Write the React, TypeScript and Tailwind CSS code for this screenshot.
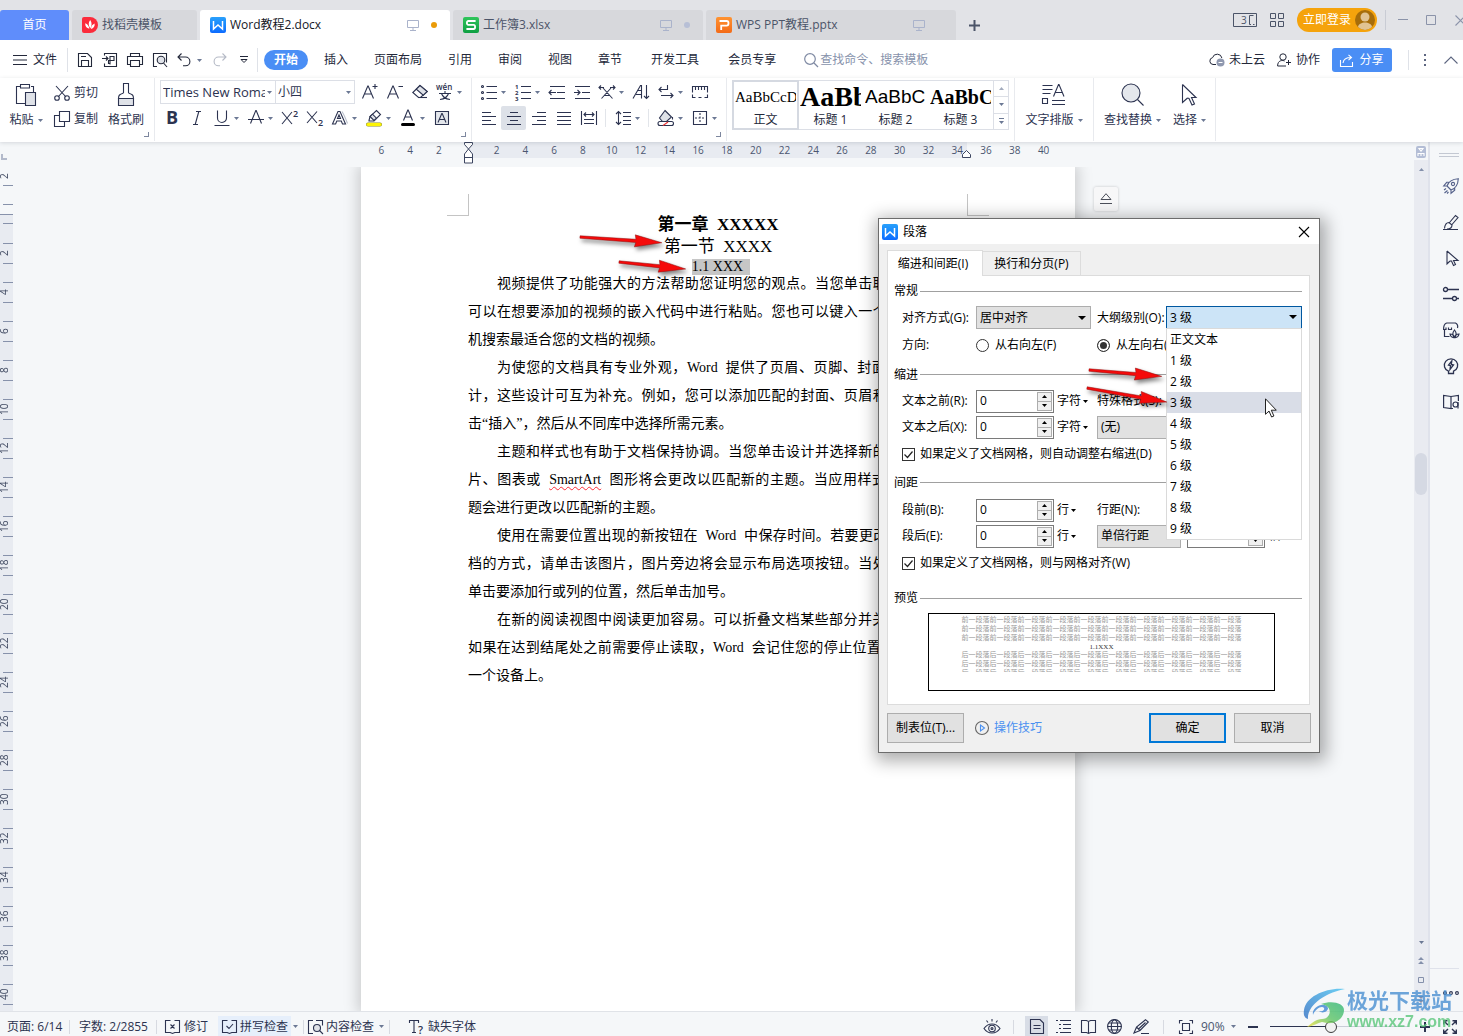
import React from "react";

type SvgProps = { w?: number; h?: number; className?: string; sw?: number; children: React.ReactNode };

function Ico({ w = 16, h = 16, className = "", sw = 1.1, children }: SvgProps) {
  return (
    <svg
      width={w}
      height={h}
      viewBox={`0 0 ${w} ${h}`}
      fill="none"
      stroke="currentColor"
      strokeWidth={sw}
      className={"shrink-0 overflow-visible " + className}
      aria-hidden="true"
    >
      {children}
    </svg>
  );
}

function Caret({ className = "text-[#6b7894]" }: { className?: string }) {
  return (
    <svg width="5" height="3" viewBox="0 0 5 3" className={"shrink-0 " + className} fill="currentColor" aria-hidden="true">
      <path d="M0 0h5L2.5 3z" />
    </svg>
  );
}

function Letter({ x, y, size, children, ...rest }: { x: number; y: number; size: number; children: string } & React.SVGProps<SVGTextElement>) {
  return (
    <text x={x} y={y} fontSize={size} fill="currentColor" stroke="none" fontFamily="Open Sans, sans-serif" {...rest}>
      {children}
    </text>
  );
}

/* ---------- application marks ---------- */

function WordMark() {
  return (
    <Ico className="rounded-[2px] bg-linear-to-b from-[#2aa0fb] to-[#0f6bff] text-white" sw={1.5}>
      <path d="M3.500 4v8L8 8l4.500 4V4" />
    </Ico>
  );
}
function SheetMark() {
  return (
    <Ico className="rounded-[2px] bg-linear-to-b from-[#2fc55b] to-[#0c9f43] text-white" sw={1.8}>
      <path d="M12.6 4H5.4c-2 0-2 3.9 0 3.9h5.2c2 0 2 4.1 0 4.1H3.4" />
    </Ico>
  );
}
function SlideMark() {
  return (
    <Ico className="rounded-[2px] bg-linear-to-b from-[#ff9331] to-[#f36a17] text-white" sw={1.8}>
      <path d="M3.5 4h7.2c2.4 0 2.4 4.6 0 4.6H5.2V13" />
    </Ico>
  );
}
function DocerMark() {
  return (
    <svg width="16" height="16" viewBox="0 0 16 16" aria-hidden="true" className="shrink-0">
      <path d="M0 2a2 2 0 0 1 2-2h6a8 8 0 0 1 0 16H2a2 2 0 0 1-2-2z" fill="#fb2b3b" />
      <path d="M8.2 3c1.8 2.6 1.8 5 .2 8.4C6.2 8.4 6.2 5.6 8.2 3zM3.2 6.2c2.4.9 3.7 2.5 4.2 5.6-2.9-.7-4.4-2.6-4.2-5.6zM12.6 6.6c.4 2.9-.9 4.7-3.6 5.3.1-2.6 1.2-4.3 3.6-5.3z" fill="#fff" />
    </svg>
  );
}
function Monitor() {
  return (
    <Ico w={12} h={12} className="text-[#aab3cb]" sw={1}>
      <path d="M.5 1.5h11v7H.5zM6 8.5v3M3 11.5h6" />
    </Ico>
  );
}

/* ---------- title bar ---------- */

function TitleBar() {
  return (
    <header className="flex h-10 shrink-0 items-end bg-[#e2e3e7] text-[#4b5468]">
      <button className="h-[30px] w-[69px] shrink-0 rounded-t-[3px] bg-[#5f8dfb] text-white">首页</button>
      <button className="ml-[3px] flex h-[30px] w-[125px] shrink-0 items-center gap-1 rounded-t-[3px] bg-[#d7d8dc] pl-[10px]">
        <DocerMark />
        找稻壳模板
      </button>
      <button className="ml-[3px] flex h-[30px] w-[250px] shrink-0 items-center gap-1 rounded-t-[3px] bg-white pl-[10px] pr-[13px] text-[#15171f]">
        <WordMark />
        <span>Word教程2.docx</span>
        <span className="ml-auto flex items-center gap-3">
          <Monitor />
          <span className="size-[6px] rounded-full bg-[#ea9b08]" />
        </span>
      </button>
      <button className="ml-[3px] flex h-[30px] w-[250px] shrink-0 items-center gap-1 rounded-t-[3px] bg-[#d7d8dc] pl-[10px] pr-[13px]">
        <SheetMark />
        <span>工作簿3.xlsx</span>
        <span className="ml-auto flex items-center gap-3">
          <Monitor />
          <span className="size-[6px] rounded-full bg-[#b7bfd6]" />
        </span>
      </button>
      <button className="ml-[3px] flex h-[30px] w-[250px] shrink-0 items-center gap-1 rounded-t-[3px] bg-[#d7d8dc] pl-[10px] pr-[31px]">
        <SlideMark />
        <span>WPS PPT教程.pptx</span>
        <span className="ml-auto">
          <Monitor />
        </span>
      </button>
      <button aria-label="新建标签" className="ml-3 flex h-[30px] w-3 items-center justify-center">
        <Ico w={11} h={11} sw={2}>
          <path d="M5.5 0v11M0 5.5h11" />
        </Ico>
      </button>
      <div className="ml-auto flex h-10 items-center">
        <button aria-label="切换窗口">
          <Ico w={24} h={14} sw={1}>
            <path d="M.5.5h23v13H.5zM20.500 2.500h-4v9h1.500M21.500 11.500H20" />
            <Letter x={8} y={11} size={10}>3</Letter>
          </Ico>
        </button>
        <button aria-label="应用" className="ml-[13px]">
          <Ico w={14} h={14} sw={1}>
            <path d="M.5.5h5v5h-5zM8.5.5h5v5h-5zM.5 8.5h5v5h-5zM8.5 8.5h5v5h-5z" />
          </Ico>
        </button>
        <button className="ml-[13px] flex h-6 w-20 items-center justify-between rounded-full bg-[#f5a30c] pl-[6px] pr-[2px] text-white">
          立即登录
          <svg width="20" height="20" viewBox="0 0 20 20" aria-hidden="true">
            <circle cx="10" cy="10" r="10" fill="#a76d0a" />
            <circle cx="10" cy="7" r="4.5" fill="#e1c393" />
            <path d="M3 17.1c.7-6 13.3-6 14 0a10 10 0 0 1-14 0z" fill="#e1c393" />
          </svg>
        </button>
        <span className="ml-2 h-5 w-px bg-[#c9ccd4]" />
        <button aria-label="最小化" className="ml-[12px] text-[#8b93a9]">
          <Ico w={10} h={10} sw={1}>
            <path d="M0 4.5h10" />
          </Ico>
        </button>
        <button aria-label="最大化" className="ml-[18px] text-[#8b93a9]">
          <Ico w={10} h={10} sw={1}>
            <path d="M.5.5h9v9h-9z" />
          </Ico>
        </button>
        <button aria-label="关闭" className="ml-[19px] w-2 overflow-hidden text-[#8b93a9]">
          <Ico w={11} h={11}>
            <path d="M.5.5l10 10M10.5.5l-10 10" />
          </Ico>
        </button>
      </div>
    </header>
  );
}

/* ---------- menu row ---------- */

const menuTabs = [
  { t: "插入", c: "ml-4" },
  { t: "页面布局", c: "ml-[26px]" },
  { t: "引用", c: "ml-[26px]" },
  { t: "审阅", c: "ml-[26px]" },
  { t: "视图", c: "ml-[26px]" },
  { t: "章节", c: "ml-[26px]" },
  { t: "开发工具", c: "ml-[29px]" },
  { t: "会员专享", c: "ml-[29px]" },
];

function MenuRow() {
  return (
    <nav className="flex h-[38px] shrink-0 items-center bg-white pl-[13px] pt-[2px] text-[#23283a]">
      <button className="flex items-center gap-[6px]">
        <Ico w={14} h={10} sw={1}>
          <path d="M0 .5h14M0 5h14M0 9.5h14" />
        </Ico>
        文件
      </button>
      <span className="ml-[10px] h-6 w-px bg-[#dfe2e8]" />
      <button aria-label="保存" className="ml-[9px]">
        <Ico>
          <path d="M1.500 14.500v-13h9l4 4v9zM4.500 14.500v-6h7v6M4 4.500h5" />
        </Ico>
      </button>
      <button aria-label="输出为PDF" className="ml-[9px]">
        <Ico>
          <path d="M2.500 3.500v-2h12v13h-12v-3M0 6.500h6M4 4.500l2 2-2 2M8 12.500v-8h4v4H6.500v3H8" />
        </Ico>
      </button>
      <button aria-label="打印" className="ml-[9px]">
        <Ico>
          <path d="M3.500 4.500v-3h9v3M3 12.500H.5v-8h15v8H13M3.500 8.500h9v6h-9z" />
        </Ico>
      </button>
      <button aria-label="打印预览" className="ml-[9px]">
        <Ico>
          <path d="M5 14.500H1.500v-13h13v9" />
          <circle cx="9" cy="8" r="3.8" fill="#dfe2e8" />
          <path d="M11.500 11l3.500 4" />
        </Ico>
      </button>
      <button aria-label="撤销" className="ml-[9px] flex items-center gap-[6px]">
        <Ico w={14}>
          <path d="M4.500 1.500L1 5l3.500 3.500M1 5h7.500a4.400 4.400 0 0 1 0 8.800H6" />
        </Ico>
        <Caret />
      </button>
      <button aria-label="恢复" className="ml-[11px] text-[#b5bac6]">
        <Ico w={14}>
          <path d="M9.500 1.500L13 5 9.500 8.500M13 5H5.500a4.400 4.400 0 0 0 0 8.800H7" />
        </Ico>
      </button>
      <button aria-label="更多" className="ml-[13px]">
        <Ico w={8} h={8} sw={1}>
          <path d="M0 .5h8M1 3.500h6L4 6.500z" />
        </Ico>
      </button>
      <span className="ml-[9px] h-6 w-px bg-[#dfe2e8]" />
      <button className="ml-[6px] h-5 w-11 rounded-full bg-[#4a8ef5] font-bold text-white">开始</button>
      {menuTabs.map((m) => (
        <button key={m.t} className={m.c + " shrink-0"}>
          {m.t}
        </button>
      ))}
      <label className="ml-[28px] flex items-center gap-[2px] text-[#7f8aa3]">
        <Ico w={14} h={14} sw={1.2}>
          <circle cx="6" cy="6" r="5.3" />
          <path d="M10 10l4 4" />
        </Ico>
        <input
          aria-label="搜索"
          placeholder="查找命令、搜索模板"
          className="w-[120px] bg-transparent outline-none placeholder:text-[#8792ab]"
        />
      </label>
      <div className="ml-auto flex shrink-0 items-center">
        <button className="flex items-center gap-1">
          <Ico sw={1}>
            <path d="M7 12.500H4a3.500 3.500 0 0 1-.4-6.900 4.800 4.800 0 0 1 9.300.4" />
            <circle cx="11.5" cy="10.5" r="4" fill="#8f98af" stroke="none" />
            <path d="M9.500 10.500h4" stroke="#fff" />
          </Ico>
          未上云
        </button>
        <button className="ml-3 flex items-center gap-1">
          <Ico w={15} h={14} sw={1}>
            <circle cx="6" cy="4" r="3.2" />
            <path d="M9 13H.6c0-6 5-6 7-5M9 9.500h5M11.500 7v5" />
          </Ico>
          协作
        </button>
        <button className="ml-3 flex h-6 w-[60px] items-center justify-center gap-[6px] rounded-[3px] bg-[#4a8ef5] text-white">
          <Ico w={13} h={13}>
            <path d="M.5 6v6.500h12V8M3 9c.5-4 3-5.500 8-5.500M8.500.8l3 2.700-3 2.700" />
          </Ico>
          分享
        </button>
        <span className="ml-4 h-5 w-px bg-[#dfe2e8]" />
        <button aria-label="更多选项" className="ml-[15px] text-[#5d6680]">
          <Ico w={2} h={12} sw={2}>
            <path d="M0 1h2M0 6h2M0 11h2" />
          </Ico>
        </button>
        <button aria-label="收起功能区" className="ml-[18px] mr-[5px] text-[#5d6680]">
          <Ico w={14} h={8}>
            <path d="M.5 7.500L7 1l6.500 6.500" />
          </Ico>
        </button>
      </div>
    </nav>
  );
}

/* ---------- ribbon ---------- */

function Tool({ label, caret, on, children }: { label: string; caret?: boolean; on?: boolean; children: React.ReactNode }) {
  return (
    <button aria-label={label} className="flex h-6 shrink-0 items-center">
      <span className={"flex h-6 w-[25px] items-center justify-center rounded-[2px] " + (on ? "bg-[#dde1e8]" : "")}>{children}</span>
      {caret && (
        <span className="flex w-[9px]">
          <Caret />
        </span>
      )}
    </button>
  );
}

function Launcher() {
  return (
    <button aria-label="展开设置" className="absolute bottom-1 right-[5px] size-[5px] border-b border-r border-[#7d879e]" />
  );
}

function Ribbon() {
  return (
    <section className="relative z-10 flex h-16 shrink-0 bg-white pb-px text-[#2c3350] shadow-[0_1px_4px_rgba(60,70,90,0.18)]">
      {/* clipboard */}
      <div className="relative flex w-[155px] shrink-0 border-r border-[#e8eaee] pl-[10px] pt-1">
        <button className="flex w-8 flex-col items-center">
          <Ico w={22} h={24} className="mt-px">
            <path d="M6 3.500H1.500v17H10M16 3.500h2.500V9M5.500 1.500h9V5h-9z" />
            <path d="M10.500 9.500h10v13h-10z" fill="#dfe2e8" />
          </Ico>
          <span className="mt-[5px] flex items-center gap-1 leading-4 whitespace-nowrap">
            粘贴
            <Caret />
          </span>
        </button>
        <div className="ml-3 flex w-[46px] flex-col gap-[2px]">
          <button className="-mt-px flex h-6 items-center gap-1 whitespace-nowrap">
            <Ico>
              <path d="M2 1l10 11M14 1L4 12" />
              <circle cx="3" cy="13" r="2.3" />
              <circle cx="13" cy="13" r="2.3" />
            </Ico>
            剪切
          </button>
          <button className="flex h-6 items-center gap-1 whitespace-nowrap">
            <Ico>
              <path d="M5.500.5h10v10h-10zM5.500 4.500h-5v11h10v-5" />
            </Ico>
            复制
          </button>
        </div>
        <button className="ml-2 flex w-9 flex-col items-center">
          <Ico w={18} h={24} className="mt-px">
            <path d="M6.500 10V.5h5V10M6.500 10c-4 1.500-5 2-5 5.500h15c0-3.500-1-4-5-5.500" />
            <path d="M1.500 15.500h15v7h-15z" fill="#dfe2e8" />
          </Ico>
          <span className="mt-[5px] leading-4">格式刷</span>
        </button>
        <Launcher />
      </div>

      {/* font */}
      <div className="relative w-[317px] shrink-0 border-r border-[#e8eaee] pl-1 pt-[2px]">
        <div className="ml-px flex items-center">
          <div className="flex h-6 w-[195px] border border-[#dcdfe6]">
            <button aria-label="字体" className="flex w-[115px] items-center justify-between border-r border-[#dcdfe6] pl-[2px] pr-[3px] text-[13px]">
              <span className="w-[102px] overflow-hidden whitespace-nowrap text-left">Times New Roman</span>
              <Caret />
            </button>
            <button aria-label="字号" className="flex flex-1 items-center justify-between pl-[2px] pr-[3px]">
              小四
              <Caret />
            </button>
          </div>
          <span className="w-[2px]" />
          <Tool label="增大字号">
            <Ico>
              <path d="M.5 14.500L5.800 2h.4l5.300 12.500M2.400 10h7.200M10.500 2.500h5M13 0v5" />
            </Ico>
          </Tool>
          <Tool label="减小字号">
            <Ico>
              <path d="M.5 14.500L5.800 2h.4l5.300 12.500M2.400 10h7.200M11.500 2.500h4.500" />
            </Ico>
          </Tool>
          <Tool label="清除格式">
            <Ico>
              <path d="M8 1.500L.8 8.500l5.700 5h2l6.700-6z" />
              <path d="M8 1.500L4.300 5.200l7 6L15.200 7.500z" fill="#dfe2e8" />
              <path d="M6 13.500h9" />
            </Ico>
          </Tool>
          <Tool label="拼音指南" caret>
            <Ico>
              <Letter x={-1} y={6} size={8} fontWeight={600}>wén</Letter>
              <path d="M8 7v2M2 9.500h12M4.500 9.500c1 3 4 5.500 8.500 6M11.500 9.500c-1 3-4 5.500-8.500 6" />
            </Ico>
          </Tool>
        </div>
        <div className="mt-[2px] flex">
          <Tool label="加粗">
            <Ico>
              <Letter x={2} y={14} size={18} fontWeight={700}>B</Letter>
            </Ico>
          </Tool>
          <Tool label="倾斜">
            <Ico>
              <path d="M7 1.500h5M4 14.500h5M9.800 1.500l-3.600 13" />
            </Ico>
          </Tool>
          <Tool label="下划线" caret>
            <Ico>
              <path d="M3.500.5v7.500a4.500 4.500 0 0 0 9 0V.5M.5 15.500h15" />
            </Ico>
          </Tool>
          <Tool label="删除线" caret>
            <Ico>
              <path d="M2.500 13.500L7.800.5h.4l5.300 13M0 9.500h16" />
            </Ico>
          </Tool>
          <Tool label="上标">
            <Ico>
              <path d="M0 2l10 12M10 2L0 14" />
              <Letter x={11} y={7} size={9} fontWeight={600}>2</Letter>
            </Ico>
          </Tool>
          <Tool label="下标">
            <Ico>
              <path d="M0 1.500l10 11.500M10 1.500L0 13" />
              <Letter x={11} y={16} size={9} fontWeight={600}>2</Letter>
            </Ico>
          </Tool>
          <Tool label="文字效果" caret>
            <Ico>
              <path d="M.5 14L6 1.500h2L13.500 14h-3l-1.200-3H4.800l-1.200 3zM5.500 8.500h3L7 5z" />
              <path d="M10 1.500c2 3 4 8 5.500 12" stroke="#b9bfcc" />
            </Ico>
          </Tool>
          <Tool label="突出显示" caret>
            <Ico>
              <path d="M3 10.500l1-4 6.500-6 4 4L8 11H3z" />
              <path d="M4 6.500l4 4 2.500-2.300-4-4z" fill="#dfe2e8" />
              <path d="M2 14.500h12" stroke="#8a8a20" strokeWidth="4" strokeLinecap="round" />
              <path d="M2 14.500h12" stroke="#fdf506" strokeWidth="3" strokeLinecap="round" />
            </Ico>
          </Tool>
          <Tool label="字体颜色" caret>
            <Ico>
              <path d="M3.500 10.500L7.800 0h.4l4.300 10.500M5 7h6" />
              <path d="M2.500 14.500h11" stroke="#000" strokeWidth="3" strokeLinecap="round" />
            </Ico>
          </Tool>
          <Tool label="字符底纹">
            <Ico>
              <path d="M1.500 1.500h13v13h-13z" fill="#e4e7ec" />
              <path d="M4 12.500L7.800 3.500h.4l3.800 9M5.200 9.500h5.600" />
            </Ico>
          </Tool>
        </div>
        <Launcher />
      </div>

      {/* paragraph */}
      <div className="relative w-[255px] shrink-0 border-r border-[#e8eaee] pl-1 pt-[2px]">
        <div className="flex">
          <Tool label="项目符号" caret>
            <Ico>
              <path d="M5.500 2.500H16M5.500 8.500H16M5.500 14.500H16" />
              <circle cx="1.5" cy="2.5" r="1" />
              <circle cx="1.5" cy="8.5" r="1" />
              <circle cx="1.5" cy="14.5" r="1" />
            </Ico>
          </Tool>
          <Tool label="编号" caret>
            <Ico>
              <path d="M6 2.500h10M6 8.500h10M6 14.500h10" />
              <Letter x={0} y={5} size={6} fontWeight={700}>1</Letter>
              <Letter x={0} y={11} size={6} fontWeight={700}>2</Letter>
              <Letter x={0} y={17} size={6} fontWeight={700}>3</Letter>
            </Ico>
          </Tool>
          <Tool label="减少缩进量">
            <Ico>
              <path d="M1 2.500h15M8 8.500h8M1 14.500h15M7 8.500H0M2.500 6L0 8.500 2.500 11" />
            </Ico>
          </Tool>
          <Tool label="增加缩进量">
            <Ico>
              <path d="M1 2.500h15M8 8.500h8M1 14.500h15M0 8.500h6M3.500 6L6 8.500 3.500 11" />
            </Ico>
          </Tool>
          <Tool label="中文版式" caret>
            <Ico>
              <path d="M2.500 14.500L12 4M4 4l9.500 10.500M5 11.500h6M0 3.500h5M2 1.500l-2 2 2 2M16 3.500h-5M14 1.500l2 2-2 2" />
            </Ico>
          </Tool>
          <Tool label="排序">
            <Ico>
              <path d="M0 14.500L7.500 1.500h1v13M3 10.500h5.500M4.500 6.500h4M13.500 1v13.500M11 12l2.500 2.500L16 12" />
            </Ico>
          </Tool>
          <Tool label="换行标记" caret>
            <Ico>
              <path d="M9.500 1v4.500H1M3.500 3L1 5.500 3.500 8M3 11.500h12M12.500 9l2.500 2.500-2.500 2.500" />
            </Ico>
          </Tool>
          <Tool label="制表位">
            <Ico>
              <path d="M.5 8.500v-6h15v6M3.500 3v3M6.500 3v3M9.500 3v3M12.500 3v3M.5 10.500v3h3M6.500 13.500h3M15.500 10.500v3h-3" />
            </Ico>
          </Tool>
        </div>
        <div className="mt-[2px] flex items-center">
          <Tool label="左对齐">
            <Ico>
              <path d="M1 2.500h9M1 6.500h14M1 10.500h9M1 14.500h14" />
            </Ico>
          </Tool>
          <Tool label="居中对齐" on>
            <Ico>
              <path d="M4 2.500h8M1 6.500h14M4 10.500h8M1 14.500h14" />
            </Ico>
          </Tool>
          <Tool label="右对齐">
            <Ico>
              <path d="M6 2.500h9M1 6.500h14M6 10.500h9M1 14.500h14" />
            </Ico>
          </Tool>
          <Tool label="两端对齐">
            <Ico>
              <path d="M1 2.500h14M1 6.500h14M1 10.500h14M1 14.500h14" />
            </Ico>
          </Tool>
          <Tool label="分散对齐">
            <Ico>
              <path d="M.5 1v14M15.500 1v14M3 4.500h10M5 2.500l-2 2 2 2M11 2.500l2 2-2 2M3 9.500h10M3 13.500h10" />
            </Ico>
          </Tool>
          <span className="mx-1 h-[18px] w-px bg-[#e2e5ea]" />
          <Tool label="行距" caret>
            <Ico>
              <path d="M3.500 1.500v13M1 4l2.500-2.500L6 4M1 12l2.500 2.500L6 12M8 2.500h8M8 6.500h8M8 10.500h8M8 14.500h8" />
            </Ico>
          </Tool>
          <span className="mx-1 h-[18px] w-px bg-[#e2e5ea]" />
          <Tool label="底纹颜色" caret>
            <Ico>
              <path d="M7 .5l6.500 6.500-5 4.500h-4L1.500 8z" fill="#dfe2e8" />
              <path d="M2 11.500h11.500a2 2 0 0 1 0 4H2a2 2 0 0 1 0-4zM14.500 7v2.500" fill="#fff" />
              <path d="M5 15.500L10 12" stroke="#e33" />
            </Ico>
          </Tool>
          <Tool label="边框" caret>
            <Ico>
              <path d="M1.500 1.500h13v13h-13z" />
              <path d="M8 3v10M3 8h10" strokeDasharray="2 1.5" />
            </Ico>
          </Tool>
        </div>
        <Launcher />
      </div>

      {/* styles */}
      <div className="w-[288px] shrink-0 border-r border-[#e8eaee] pl-[5px] pt-[2px]">
        <div className="flex h-[50px] w-[277px] border border-[#dcdfe6] text-black">
          <StyleCell name="正文" on sample={<span className="font-['Liberation_Serif'] text-[15px]">AaBbCcDd</span>} />
          <StyleCell name="标题 1" sample={<span className="font-['Liberation_Serif'] text-[28px] font-bold">AaBb</span>} />
          <StyleCell name="标题 2" sample={<span className="font-['Liberation_Sans'] text-[19px]">AaBbC</span>} />
          <StyleCell name="标题 3" sample={<span className="font-['Liberation_Serif'] text-[20px] font-bold">AaBbCc</span>} />
          <div className="flex flex-1 flex-col divide-y divide-[#dcdfe6] border-l border-[#dcdfe6]">
            <button aria-label="上一行" className="flex flex-1 items-center justify-center">
              <Caret className="rotate-180 text-[#a3abbd]" />
            </button>
            <button aria-label="下一行" className="flex flex-1 items-center justify-center">
              <Caret />
            </button>
            <button aria-label="更多样式" className="flex flex-1 flex-col items-center justify-center gap-[2px]">
              <span className="h-px w-[5px] bg-[#6b7894]" />
              <Caret />
            </button>
          </div>
        </div>
      </div>

      {/* typesetting */}
      <div className="flex w-[79px] shrink-0 flex-col items-center border-r border-[#e8eaee] pt-1">
        <button className="flex flex-col items-center">
          <Ico w={24} h={24} className="mt-px">
            <path d="M.5 2.500h10M.5 6.500h10M.5 10.500h8M.5 15.500h5v5h-5zM10 17.500h13M10 21.500h13M11.500 13.500l5-12h.5l5 12M13.500 9.500h7" />
          </Ico>
          <span className="mt-[5px] flex items-center gap-1 leading-4 whitespace-nowrap">
            文字排版
            <Caret />
          </span>
        </button>
      </div>

      {/* find and select */}
      <div className="flex w-[122px] shrink-0 gap-3 border-r border-[#e8eaee] pl-[10px] pt-1">
        <button className="flex flex-col items-center">
          <Ico w={24} h={24} className="mt-px">
            <circle cx="10" cy="10" r="9" fill="#e4e7ec" />
            <path d="M16.500 16.500l6 6" />
          </Ico>
          <span className="mt-[5px] flex items-center gap-1 leading-4 whitespace-nowrap">
            查找替换
            <Caret />
          </span>
        </button>
        <button className="flex flex-col items-center">
          <Ico w={16} h={24} className="mt-px">
            <path d="M.5 1.500v18l5-4.500M.5 1.500L14 14.500H9.500l3 6.500-2.500 1-3-6.500-1.500-.5" />
          </Ico>
          <span className="mt-[5px] flex items-center gap-1 leading-4 whitespace-nowrap">
            选择
            <Caret />
          </span>
        </button>
      </div>
    </section>
  );
}

function StyleCell({ name, sample, on }: { name: string; sample: React.ReactNode; on?: boolean }) {
  return (
    <button
      className={
        "flex w-[65px] shrink-0 flex-col items-center " + (on ? "outline-2 -outline-offset-1 outline-[#d5d9e1]" : "")
      }
    >
      <span className="flex h-[31px] w-[61px] items-center overflow-hidden whitespace-nowrap">{sample}</span>
      <span className="leading-4 text-[#23283a]">{name}</span>
    </button>
  );
}

/* ---------- rulers ---------- */

const hLabels = ["6", "4", "2", "", "2", "4", "6", "8", "10", "12", "14", "16", "18", "20", "22", "24", "26", "28", "30", "32", "34", "36", "38", "40"];
const vLabels = ["2", "4", "6", "8", "10", "12", "14", "16", "18", "20", "22", "24", "26", "28", "30", "32", "34", "36", "38", "40"];

function HorizontalRuler() {
  return (
    <div className="flex h-[25px] shrink-0 justify-center pl-[9px] text-[10px] leading-4 text-[#4b5670]">
      <div className="relative h-4 w-[714px] shrink-0">
        <div className="absolute left-[107px] h-4 w-[499px] bg-[#e8ebf1]" />
        <div className="relative ml-[6px] grid w-[691px] grid-cols-24 text-center">
          {hLabels.map((l, i) => (
            <span key={i}>{l}</span>
          ))}
        </div>
        <Ico w={10} h={22} className="absolute left-[103px] top-0 text-[#3c4560]" sw={1}>
          <path d="M.5.5h8v2L4.500 7 .5 2.500zM4.500 7l4 5v9h-8v-9zM.5 15.500h8" fill="#fff" />
        </Ico>
        <Ico w={10} h={8} className="absolute left-[601px] top-2 text-[#3c4560]" sw={1}>
          <path d="M4.500.5l4 4v3h-8v-3z" fill="#fff" />
        </Ico>
      </div>
    </div>
  );
}

function RulerNumber({ children }: { children: string }) {
  return (
    <span className="flex h-full w-[9px] rotate-180 items-center justify-center text-[10px] leading-[9px] [writing-mode:vertical-rl]">{children}</span>
  );
}

function VerticalRuler() {
  return (
    <div className="flex w-[13px] shrink-0 flex-col overflow-hidden text-[#3f4961]">
      <div className="h-[26px] shrink-0 pl-px pt-3">
        <div className="size-[6px] border-b-2 border-l-2 border-[#b3bacb]" />
      </div>
      <div className="h-[17px] shrink-0">
        <RulerNumber>2</RulerNumber>
      </div>
      <div className="ml-[3px] h-[20px] shrink-0 border-y border-[#8792ab]" />
      <div className="h-[9px] shrink-0" />
      <div className="min-h-0 flex-1 border-t border-[#8792ab] bg-[#e8ebf1]">
        <div className="ml-[3px] h-[9px] border-b border-[#8792ab]" />
        <div className="h-[19px]" />
        {vLabels.map((l) => (
          <div key={l} className="h-[39px]">
            <div className="ml-[3px] border-t border-[#8792ab]" />
            <div className="h-[19px]">
              <RulerNumber>{l}</RulerNumber>
            </div>
            <div className="ml-[3px] border-t border-[#8792ab]" />
          </div>
        ))}
      </div>
    </div>
  );
}

/* ---------- document ---------- */

const paragraphs: { lines: React.ReactNode[]; last: string; hang?: boolean }[] = [
  {
    lines: ["视频提供了功能强大的方法帮助您证明您的观点。当您单击联机视频时，", "可以在想要添加的视频的嵌入代码中进行粘贴。您也可以键入一个关键字以联"],
    last: "机搜索最适合您的文档的视频。",
  },
  {
    lines: ["为使您的文档具有专业外观，Word\u00a0 提供了页眉、页脚、封面和文本框设", "计，这些设计可互为补充。例如，您可以添加匹配的封面、页眉和提要栏。单"],
    last: "击“插入”，然后从不同库中选择所需元素。",
  },
  {
    lines: [
      "主题和样式也有助于文档保持协调。当您单击设计并选择新的主题时，图",
      <>
        片、图表或{"\u00a0 "}
        <span className="underline decoration-red-500 decoration-wavy decoration-1 underline-offset-2">SmartArt</span>
        {"\u00a0 "}图形将会更改以匹配新的主题。当应用样式时，您的标
      </>,
    ],
    last: "题会进行更改以匹配新的主题。",
  },
  {
    lines: ["使用在需要位置出现的新按钮在\u00a0 Word\u00a0 中保存时间。若要更改图片适应文", "档的方式，请单击该图片，图片旁边将会显示布局选项按钮。当处理表格时，"],
    last: "单击要添加行或列的位置，然后单击加号。",
  },
  {
    lines: ["在新的阅读视图中阅读更加容易。可以折叠文档某些部分并关注所需文本。", "如果在达到结尾处之前需要停止读取，Word\u00a0 会记住您的停止位置\u00a0 -\u00a0 即使在另"],
    last: "一个设备上。",
    hang: true,
  },
];

function DocumentPage() {
  return (
    <div className="flex min-h-0 flex-1 justify-center overflow-hidden pl-[9px]">
      <article className="relative w-[714px] shrink-0 bg-white font-['Liberation_Serif','Noto_Sans_CJK_SC',serif] text-black shadow-[0_0_14px_3px_rgba(0,0,0,0.18)]">
        <div className="flex justify-between px-[86px] pt-[27px]">
          <div className="size-[22px] border-b border-r border-[#c4c4c4]" />
          <div className="size-[22px] border-b border-l border-[#c4c4c4]" />
        </div>
        <h1 className="-mt-[2px] text-center text-[17px] font-bold leading-[22px]">
          第一章&nbsp; XXXXX
        </h1>
        <h2 className="text-center text-[17px] leading-[22px]">第一节&nbsp; XXXX</h2>
        <h3 className="-mb-[5px] mt-px flex justify-center pl-[6px] text-[14px] leading-4">
          <span className="bg-[#c6c6c6] pr-[7px]">1.1 XXX</span>
        </h3>
        <div className="ml-[107px] w-[491px] text-[14px] leading-7">
          {paragraphs.map((p, i) => (
            <p key={i}>
              {p.lines.map((l, j) => (
                <span
                  key={j}
                  className={
                    "block whitespace-nowrap text-justify [text-align-last:justify] " +
                    (j === 0 ? "pl-[29px] " : "") +
                    (j === 0 && p.hang ? "-mr-[14px]" : "")
                  }
                >
                  {l}
                </span>
              ))}
              <span className="block">{p.last}</span>
            </p>
          ))}
        </div>
        <button
          aria-label="收起"
          className="absolute left-full top-5 ml-[19px] flex size-6 items-center justify-center rounded-[2px] bg-[#f7f7f8] text-[#4b4f5a] shadow-[0_0_3px_rgba(0,0,0,0.2)]"
        >
          <Ico w={12} h={12} sw={1}>
            <path d="M6 .7l5 5.800H1zM0 10.500h12" />
          </Ico>
        </button>
      </article>
    </div>
  );
}

function ScrollColumn() {
  return (
    <div className="flex w-4 shrink-0 flex-col items-center border-r-2 border-[#dfe2eb] bg-[#e9ebf1] text-[#8490ab]">
      <div className="flex h-[18px] w-full shrink-0 items-end justify-center bg-[#f5f7f9] pb-[2px]">
        <Ico w={10} h={12} className="rounded-[2px] bg-[#b4bed6] text-white">
          <path d="M3 2.500h4L5 5zM2 10V7.500h6V10M5 7.500V10" />
        </Ico>
      </div>
      <Caret className="mt-2 rotate-180" />
      <div className="mt-[282px] h-[42px] w-3 shrink-0 rounded-full bg-[#d5d9e3]" />
      <div className="flex-1" />
      <div className="flex flex-col items-center gap-[13px] pb-2">
        <Caret />
        <Ico w={6} h={7}>
          <path d="M0 3l3-3 3 3zM0 7l3-3 3 3z" fill="currentColor" stroke="none" />
        </Ico>
        <Ico w={6} h={6} sw={1}>
          <path d="M.5.5h5v5h-5z" />
        </Ico>
        <Ico w={6} h={7}>
          <path d="M0 0h6L3 3zM0 4h6L3 7z" fill="currentColor" stroke="none" />
        </Ico>
      </div>
    </div>
  );
}

function SidePanel() {
  return (
    <aside className="flex w-[33px] shrink-0 flex-col items-end bg-[#f5f7f9] pr-[4px] pt-[11px] text-[#2c3350]">
      <div className="h-1 w-[20px] border-y border-[#c3c8d2]" />
      <div className="mt-[21px] flex flex-col gap-5">
        <button aria-label="快捷">
          <Ico className="text-[#54618a]">
            <path d="M4 8c1.500-4.500 5-7 11.300-7.300C15 7 12.500 10.500 8 12zM4 8l-3.300 0 3-3.700h2M8 12v3.300l3.700-3v-2M1 12l2-1.500M1.500 15l3-2.500M4 15.500l1.500-1.500" />
            <circle cx="10" cy="6" r="1.6" />
          </Ico>
        </button>
        <button aria-label="样式">
          <Ico>
            <path d="M0 15.500h15M6.500 8.500l6-7 2.500 2-6 7M1.500 14.500c.5-4.500 2-6 4.500-6l3 2.500c0 2.500-2 4-5 4" />
          </Ico>
        </button>
        <button aria-label="选择窗格">
          <Ico>
            <path d="M4 1v13l3-3M4 1l11 9.500h-4.500l2 4-2 1-2-4.500H7" />
          </Ico>
        </button>
        <button aria-label="属性">
          <Ico sw={1.3}>
            <circle cx="2.5" cy="3.5" r="2" />
            <path d="M4.500 3.500H16M0 12.500h9.500M13.500 12.500H16" />
            <circle cx="11.5" cy="12.5" r="2" />
          </Ico>
        </button>
        <button aria-label="素材">
          <Ico sw={1.2}>
            <path d="M6.500 14.500h-5V7.500M3.500 1h9c2 1 2.500 3 2 5M3.500 1C1 2 .5 4.500.6 7.500h2.400V5.500M5.500 5.500v2h3v-2" />
            <path d="M11.500 15.500c-2-2-2-5 0-7.500 2 2.500 2 5.500 0 7.500zM11.500 15.500c-2.500.3-4-1-4.500-3.500 2.500 0 4 1.200 4.500 3.500zM11.500 15.500c2.500.3 4-1 4.500-3.500-2.500 0-4 1.200-4.500 3.500z" />
          </Ico>
        </button>
        <button aria-label="帮助">
          <Ico sw={1.3}>
            <path d="M5.500 13.200a6.700 6.400 0 1 1 5 0v2.300h-5z" />
            <path d="M8.800 3l-3.300 4.200 2 .5-.5 3.800 3.500-4.500-2.200-.5z" />
          </Ico>
        </button>
        <button aria-label="查阅">
          <Ico sw={1.2}>
            <path d="M8 2.500L.6 1.500v12L8 14.500zM8 2.500l7.400-1V7M8 14.500h2" />
            <circle cx="12.5" cy="10.500" r="2.5" />
            <path d="M15 8v6.500" />
          </Ico>
        </button>
      </div>
      <div className="mt-auto flex h-[43px] w-full justify-end border-t border-[#dfe2eb] pt-[22px]">
        <Ico w={16} h={4}>
          <circle cx="2" cy="2" r="1.4" />
          <circle cx="8" cy="2" r="1.4" />
          <circle cx="14" cy="2" r="1.4" />
        </Ico>
      </div>
    </aside>
  );
}

/* ---------- status bar ---------- */

function StatusBar() {
  const rule = "h-[14px] w-px shrink-0 bg-[#d7dae1]";
  return (
    <footer className="flex h-[25px] shrink-0 items-center border-t border-[#e0e3e8] bg-[#f5f7f9] pt-[5px] text-[#2c3350]">
      <span className="ml-[7px] w-[57px] shrink-0 whitespace-nowrap">页面: 6/14</span>
      <span className={"ml-[5px] " + rule} />
      <span className="ml-[9px] w-[72px] shrink-0 whitespace-nowrap">字数: 2/2855</span>
      <span className={"ml-[5px] " + rule} />
      <button className="ml-[8px] flex shrink-0 items-center gap-1">
        <Ico w={15} h={14}>
          <path d="M5.500.5h-5v12h4.700l2.300 1 2.300-1h4.700V.5h-5M5.500 4.500l4 4M9.500 4.500l-4 4" />
        </Ico>
        修订
      </button>
      <button className="ml-[10px] flex h-[21px] w-[73px] shrink-0 items-center gap-[3px] bg-[#e6effb] pl-1">
        <Ico w={15} h={14}>
          <path d="M5.500.5h-5v12h4.700l2.300 1 2.300-1h4.700V.5h-5M4.500 6L7 8.500 11 4" />
        </Ico>
        拼写检查
      </button>
      <span className="ml-[2px] flex">
        <Caret />
      </span>
      <span className={"ml-[5px] " + rule} />
      <button className="ml-1 flex shrink-0 items-center gap-[3px]">
        <Ico w={15} h={14}>
          <path d="M5 .5H.5v13H5M8 .5h6.500v5" />
          <circle cx="9" cy="8" r="3.5" fill="#dfe2e8" />
          <path d="M11.500 10.500L15 14" />
        </Ico>
        内容检查
        <span className="pl-[2px]">
          <Caret />
        </span>
      </button>
      <span className={"ml-[5px] " + rule} />
      <button className="ml-[19px] flex shrink-0 items-center gap-1">
        <Ico w={15} h={14}>
          <path d="M.5 3V.5h9V3M5 .5v12M3 12.500h4" />
          <Letter x={9} y={13.5} size={11} fontWeight={600}>?</Letter>
        </Ico>
        缺失字体
      </button>

      <div className="ml-auto flex shrink-0 items-center">
        <button aria-label="护眼模式">
          <Ico>
            <path d="M0 9.500c4-6 12-6 16 0-4 6-12 6-16 0zM8 0v2.500M2.500 1.500L4 3.500M13.500 1.500L12 3.500" />
            <circle cx="8" cy="9.5" r="3.3" />
            <circle cx="8" cy="9.5" r="1" />
          </Ico>
        </button>
        <span className={"ml-[13px] " + rule} />
        <button aria-label="页面视图" className="ml-[11px] flex h-[21px] w-[23px] items-center justify-center bg-[#d8dde6]">
          <Ico w={14} h={15}>
            <path d="M.5.5h9.500l3.500 3.500v10.500H.5zM3.500 6.500h7M3.500 9.500h7" />
          </Ico>
        </button>
        <button aria-label="大纲" className="ml-2">
          <Ico w={15} h={14}>
            <path d="M0 .5h2M4 .5h11M3 4.500h2M7 4.500h8M3 8.500h2M7 8.500h8M0 12.500h2M4 12.500h11" />
          </Ico>
        </button>
        <button aria-label="阅读版式" className="ml-[10px]">
          <Ico w={15} h={14}>
            <path d="M.5.5h5l2 1 2-1h5v12h-5l-2 1-2-1h-5zM7.500 1.500v12" />
          </Ico>
        </button>
        <button aria-label="Web版式" className="ml-[11px]">
          <Ico w={15} h={15}>
            <circle cx="7.5" cy="7.5" r="6.9" />
            <ellipse cx="7.5" cy="7.5" rx="3.2" ry="6.9" />
            <path d="M.5 7.500h14M1.500 4h12M1.500 11h12" />
          </Ico>
        </button>
        <button aria-label="写作模式" className="ml-[11px]">
          <Ico w={17} h={16}>
            <path d="M1 14l2.500-6L12.500.7l2.800 2.300L7 11.500zM3.500 8L7 11.500M5.500 10l7-6.500M8 14.500h8" />
          </Ico>
        </button>
        <span className={"ml-[13px] " + rule} />
        <button aria-label="适合页面" className="ml-[15px]">
          <Ico w={14} h={14}>
            <path d="M3.500 3.500h7v7h-7zM.5 3.500v-3h3M10.500.5h3v3M13.500 10.500v3h-3M3.500 13.500h-3v-3" />
          </Ico>
        </button>
        <button className="ml-2 flex w-[35px] items-center justify-between text-[#4b5670]">
          90%
          <Caret />
        </button>
        <button aria-label="缩小" className="ml-[12px]">
          <Ico w={10} h={10} sw={2}>
            <path d="M0 5h10" />
          </Ico>
        </button>
        <label className="ml-3 flex">
          <span className="sr-only">显示比例</span>
          <input
            type="range"
            min={0}
            max={100}
            defaultValue={44}
            className="h-3 w-[138px] appearance-none bg-[linear-gradient(to_right,#2c3350_44%,#c9cdd8_44%)] bg-[length:100%_1px] bg-center bg-no-repeat [&::-webkit-slider-thumb]:size-3 [&::-webkit-slider-thumb]:appearance-none [&::-webkit-slider-thumb]:rounded-full [&::-webkit-slider-thumb]:border [&::-webkit-slider-thumb]:border-[#3c3c3c] [&::-webkit-slider-thumb]:bg-[#f2f2f2]"
          />
        </label>
        <button aria-label="放大" className="ml-3">
          <Ico w={10} h={10} sw={2}>
            <path d="M0 5h10M5 0v10" />
          </Ico>
        </button>
        <button aria-label="全屏" className="ml-[13px] mr-[6px]">
          <Ico w={14} h={14} sw={1.4}>
            <path d="M.7 4.500V.7h3.800M9.500.7h3.800v3.800M13.300 9.500v3.800H9.500M4.500 13.300H.7V9.500M.7.7L5 5M13.300.7L9 5M13.300 13.300L9 9M.7 13.300L5 9" />
          </Ico>
        </button>
      </div>
    </footer>
  );
}

/* ---------- paragraph dialog ---------- */

function Section({ title, className }: { title: string; className: string }) {
  return (
    <div className={"flex items-center gap-[2px] pl-[6px] pr-[7px] " + className}>
      <h3 className="shrink-0">{title}</h3>
      <div className="h-px flex-1 bg-[#a0a0a0]" />
    </div>
  );
}

function Spin({ id, className = "" }: { id: string; className?: string }) {
  return (
    <span className={"flex h-[23px] w-[78px] shrink-0 border border-[#7a7a7a] bg-white p-px " + className}>
      <input id={id} defaultValue="0" className="w-0 flex-1 pl-[2px] outline-none" />
      <span className="flex w-[15px] flex-col">
        <button aria-label="增加" className="flex flex-1 items-center justify-center border border-[#adadad] bg-[#f0f0f0]">
          <Caret className="rotate-180 text-black" />
        </button>
        <button aria-label="减少" className="flex flex-1 items-center justify-center border border-t-0 border-[#adadad] bg-[#f0f0f0]">
          <Caret className="text-black" />
        </button>
      </span>
    </span>
  );
}

function Unit({ children }: { children: string }) {
  return (
    <button className="ml-[3px] flex w-10 shrink-0 items-center gap-[2px]">
      {children}
      <Caret className="text-black" />
    </button>
  );
}

function Drop({ id, value, className }: { id: string; value: string; className: string }) {
  return (
    <span className={"relative flex shrink-0 items-center " + className}>
      <select id={id} defaultValue={value} className="h-[23px] w-full appearance-none border border-[#adadad] bg-[#e1e1e1] pl-[3px] outline-none">
        <option>{value}</option>
      </select>
      <svg width="8" height="4" viewBox="0 0 8 4" className="pointer-events-none absolute right-[5px]" aria-hidden="true">
        <path d="M0 0h8L4 4z" />
      </svg>
    </span>
  );
}

function Tick({ id, children }: { id: string; children: string }) {
  return (
    <label htmlFor={id} className="flex h-7 items-center gap-[5px] pl-[14px]">
      <span className="relative flex size-[13px]">
        <input id={id} type="checkbox" defaultChecked className="size-[13px] appearance-none border border-[#333] bg-white" />
        <Ico w={13} h={13} className="pointer-events-none absolute left-0 top-0 text-[#222]" sw={1.2}>
          <path d="M2.500 6.500L5.500 9.500l5-6" />
        </Ico>
      </span>
      {children}
    </label>
  );
}

const levels = ["正文文本", "1 级", "2 级", "3 级", "4 级", "5 级", "6 级", "7 级", "8 级", "9 级"];

function ParagraphDialog() {
  return (
    <div
      role="dialog"
      aria-label="段落"
      className="absolute left-[878px] top-[218px] z-20 w-[442px] border border-[#6c6c6c] bg-[#f0f0f0] text-black shadow-[2px_4px_16px_4px_rgba(0,0,0,0.32)]"
    >
      <div className="flex h-[25px] items-center bg-white pl-[3px] pr-[10px]">
        <WordMark />
        <h2 className="ml-[5px]">段落</h2>
        <button aria-label="关闭" className="ml-auto">
          <Ico w={10} h={10}>
            <path d="M0 0l10 10M10 0L0 10" />
          </Ico>
        </button>
      </div>
      <div className="pl-2 pr-[9px] pt-[6px]">
        <div role="tablist" className="flex items-end">
          <button role="tab" aria-selected="true" className="relative -mb-px h-[26px] w-24 border border-b-0 border-[#dcdcdc] bg-white pr-1">
            缩进和间距(I)
          </button>
          <button role="tab" aria-selected="false" className="h-6 w-[98px] border border-b-0 border-l-0 border-[#dcdcdc] bg-[#f0f0f0]">
            换行和分页(P)
          </button>
        </div>
        <div className="h-[430px] border border-[#dcdcdc] bg-white">
          <Section title="常规" className="h-[30px]" />
          <div className="flex h-[23px] items-center pl-[14px]">
            <label htmlFor="align" className="w-[74px] shrink-0">对齐方式(G):</label>
            <Drop id="align" value="居中对齐" className="w-[115px]" />
            <label htmlFor="level" className="ml-[6px] w-[69px] shrink-0 whitespace-nowrap">大纲级别(O):</label>
            <div className="relative w-[136px] shrink-0">
              <select id="level" defaultValue="3 级" className="block h-[23px] w-full appearance-none border border-[#0057a0] bg-[#cce4f7] pl-[3px] outline-none">
                {levels.map((l) => (
                  <option key={l}>{l}</option>
                ))}
              </select>
              <svg width="8" height="4" viewBox="0 0 8 4" className="pointer-events-none absolute right-[5px] top-[9px]" aria-hidden="true">
                <path d="M0 0h8L4 4z" />
              </svg>
              <ul role="listbox" className="absolute left-0 top-[22px] z-30 w-full border border-[#dadada] bg-white">
                {levels.map((l) => (
                  <li key={l} role="option" aria-selected={l === "3 级"} className={"h-[21px] pl-[3px] leading-[21px] " + (l === "3 级" ? "bg-[#d9dde7]" : "")}>
                    {l}
                  </li>
                ))}
              </ul>
            </div>
          </div>
          <div className="flex h-8 items-center pl-[14px]">
            <span className="w-[74px] shrink-0">方向:</span>
            <label className="flex w-[121px] shrink-0 items-center gap-[6px]">
              <input type="radio" name="dir" className="size-[13px] appearance-none rounded-full border border-[#333] bg-white" />
              从右向左(F)
            </label>
            <label className="flex items-center gap-[6px] whitespace-nowrap">
              <input type="radio" name="dir" defaultChecked className="size-[13px] appearance-none rounded-full border border-[#333] bg-[#333] shadow-[inset_0_0_0_2px_#fff]" />
              从左向右(L)
            </label>
          </div>
          <Section title="缩进" className="h-[27px]" />
          <div className="flex h-[26px] items-center pl-[14px]">
            <label htmlFor="before" className="w-[74px] shrink-0">文本之前(R):</label>
            <Spin id="before" />
            <Unit>字符</Unit>
            <label htmlFor="special">特殊格式(S):</label>
          </div>
          <div className="flex h-[26px] items-center pl-[14px]">
            <label htmlFor="after" className="w-[74px] shrink-0">文本之后(X):</label>
            <Spin id="after" />
            <Unit>字符</Unit>
            <Drop id="special" value="(无)" className="w-[85px]" />
          </div>
          <Tick id="auto">如果定义了文档网格，则自动调整右缩进(D)</Tick>
          <Section title="间距" className="h-[29px]" />
          <div className="flex h-[26px] items-center pl-[14px]">
            <label htmlFor="pre" className="w-[74px] shrink-0">段前(B):</label>
            <Spin id="pre" />
            <Unit>行</Unit>
            <label htmlFor="spacing">行距(N):</label>
          </div>
          <div className="flex h-[26px] items-center pl-[14px]">
            <label htmlFor="post" className="w-[74px] shrink-0">段后(E):</label>
            <Spin id="post" />
            <Unit>行</Unit>
            <Drop id="spacing" value="单倍行距" className="w-[84px]" />
            <Spin id="value" className="ml-[6px]" />
            <label htmlFor="value" className="ml-1">倍</label>
          </div>
          <Tick id="grid">如果定义了文档网格，则与网格对齐(W)</Tick>
          <Section title="预览" className="mt-2 h-[26px]" />
          <div className="ml-10 mt-[2px] h-[78px] w-[347px] border border-black pt-[2px] text-center font-['Liberation_Serif','Noto_Sans_CJK_SC',serif] text-[7px] leading-[9px] text-[#9a9a9a]">
            {[0, 1, 2].map((k) => (
              <p key={k} className="h-[9px] whitespace-nowrap">{"前一段落".repeat(10)}</p>
            ))}
            <p className="h-[8px] text-[#333]">1.1XXX</p>
            <div className="h-[21px] overflow-hidden">
              {[0, 1, 2].map((k) => (
                <p key={k} className="h-[9px] whitespace-nowrap">{"后一段落".repeat(10)}</p>
              ))}
            </div>
          </div>
        </div>
      </div>
      <div className="flex items-center px-2 pb-[9px] pt-2">
        <button className="h-[30px] w-[77px] border border-[#adadad] bg-[#e1e1e1]">制表位(T)...</button>
        <a href="#tips" className="ml-[11px] flex items-center gap-[5px] text-[#4a90f0]">
          <Ico w={14} h={14}>
            <circle cx="7" cy="7" r="6.5" stroke="#666" />
            <path d="M5.500 4v6l4-3z" />
          </Ico>
          操作技巧
        </a>
        <button className="ml-auto h-[30px] w-[77px] border-2 border-[#0078d7] bg-[#e1e1e1]">确定</button>
        <button className="ml-2 h-[30px] w-[77px] border border-[#adadad] bg-[#e1e1e1]">取消</button>
      </div>
    </div>
  );
}

/* ---------- annotations ---------- */

function Arrow({ x, y, len, angle }: { x: number; y: number; len: number; angle: number }) {
  const s = len - 26;
  return (
    <g transform={`translate(${x} ${y}) rotate(${angle})`}>
      <path
        d={`M0 -1.2 L${s} -1.6 L${s - 1} -6 L${len} 0 L${s - 1} 6 L${s} 1.6 L0 1.2z`}
        fill="#f50a0a"
        stroke="#8f1010"
        strokeWidth="0.5"
      />
    </g>
  );
}

function Annotations() {
  return (
    <svg className="pointer-events-none absolute left-0 top-0 z-30 h-full w-full drop-shadow-[2px_3px_2px_rgba(0,0,0,0.5)]" aria-hidden="true">
      <Arrow x={580} y={237} len={82} angle={4} />
      <Arrow x={619} y={262} len={67} angle={6} />
      <Arrow x={1089} y={370} len={73} angle={5} />
      <Arrow x={1087} y={388} len={81} angle={10} />
    </svg>
  );
}

function Pointer() {
  return (
    <svg width="12" height="20" viewBox="0 0 12 20" className="pointer-events-none absolute left-[1265px] top-[398px] z-40" aria-hidden="true">
      <path d="M.5.8v15.500l3.500-3.300 2.600 6 2.300-1-2.600-5.800h5z" fill="#fff" stroke="#222" />
    </svg>
  );
}

function Watermark() {
  return (
    <div className="pointer-events-none absolute bottom-1 right-[11px] z-40 flex items-center opacity-80">
      <svg width="44" height="42" viewBox="0 0 44 42" aria-hidden="true" className="mb-[3px]">
        <defs>
          <linearGradient id="wmBlue" x1="0" y1="1" x2="1" y2="0">
            <stop offset="0" stopColor="#2f6fc4" />
            <stop offset="1" stopColor="#49c4f2" />
          </linearGradient>
          <linearGradient id="wmGreen" x1="0" y1="1" x2="1" y2="0">
            <stop offset="0" stopColor="#f2e23a" />
            <stop offset="0.5" stopColor="#5cc466" />
            <stop offset="1" stopColor="#2fb678" />
          </linearGradient>
        </defs>
        <path d="M42 2C24 0 3 9 1 23c-1 6 1 8 4 9-1-11 12-25 37-30z" fill="url(#wmBlue)" />
        <path d="M10 28c-2-9 13-14 15-7 0 4-6 6-9 3 3 1 6-1 5-3-2-3-9 1-11 7z" fill="#3d86d4" />
        <path d="M18 17c11-4 23-1 23 6 0 9-10 16-22 12-4 1-9 4-15 5 5-4 9-8 15-8 9 0 12-13-1-15z" fill="url(#wmGreen)" />
      </svg>
      <div className="flex flex-col whitespace-nowrap">
        <span className="text-[21px] font-bold leading-6 text-[#4a90d2]">极光下载站</span>
        <span className="font-['Liberation_Sans'] text-[16px] font-bold leading-5 text-[#5cc77c]">www.xz7.com</span>
      </div>
    </div>
  );
}

export default function App() {
  return (
    <div
      lang="zh-CN"
      className="relative flex h-screen flex-col overflow-hidden bg-[#f5f7f9] font-['Open_Sans','Noto_Sans_CJK_SC',sans-serif] text-[12px] leading-[18px]"
    >
      <TitleBar />
      <MenuRow />
      <Ribbon />
      <main className="flex min-h-0 flex-1">
        <VerticalRuler />
        <div className="flex min-w-0 flex-1 flex-col">
          <HorizontalRuler />
          <DocumentPage />
        </div>
        <ScrollColumn />
        <SidePanel />
      </main>
      <StatusBar />
      <ParagraphDialog />
      <Annotations />
      <Pointer />
      <Watermark />
    </div>
  );
}
